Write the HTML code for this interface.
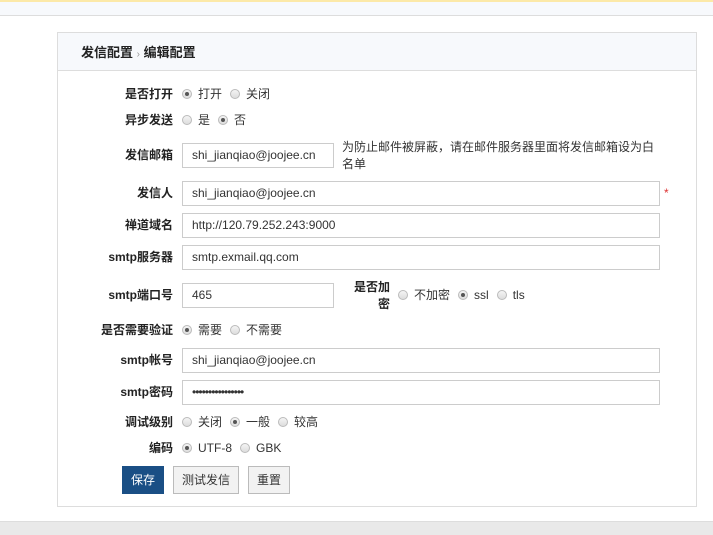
<!DOCTYPE html>
<html><head><meta charset="utf-8"><style>
*{box-sizing:border-box;margin:0;padding:0}
body{width:713px;height:535px;background:#fff;font-family:"Liberation Sans","Noto Sans CJK SC",sans-serif;font-size:12px;color:#333;position:relative;overflow:hidden}
.a{position:absolute}
.top{left:0;top:0;width:713px;height:16px;background:#f7f9fc;border-top:2px solid #fce9a8;border-bottom:1px solid #ddd}
.bot{left:0;top:521px;width:713px;height:14px;background:#e9e9e9;border-top:1px solid #ddd}
.panel{left:57px;top:32px;width:640px;height:475px;border:1px solid #ddd}
.hdr{left:58px;top:33px;width:638px;height:38px;background:#f7f9fc;border-bottom:1px solid #ddd;font-weight:bold;font-size:13px;color:#222;padding:9px 0 0 23px}
.lbl{right:540px;font-weight:bold;color:#222;text-align:right;line-height:14px}
.inp{left:182px;height:25px;border:1px solid #ccc;padding:0 9px;line-height:23px;color:#333}
.r{display:inline-block;width:10px;height:10px;border-radius:50%;border:1px solid #bbb;background:linear-gradient(#f4f4f4,#ddd);vertical-align:-1px;margin:0 6px 0 0;position:relative}
.r.on::after{content:"";position:absolute;left:2px;top:2px;width:4px;height:4px;border-radius:50%;background:#555}
.opt{left:182px;line-height:14px;color:#333}
.opt span{margin-right:8px}
.btn{top:466px;height:28px;border:1px solid #bbb;background:#f2f2f2;text-align:center;line-height:26px;color:#333}
</style></head><body>
<div class="a top"></div>
<div class="a panel"></div>
<div class="a hdr">发信配置 <span style="font-weight:normal;color:#999;font-size:10px">›</span> 编辑配置</div>

<div class="a lbl" style="top:87px">是否打开</div>
<div class="a opt" style="top:87px"><i class="r on"></i><span>打开</span><i class="r"></i><span>关闭</span></div>
<div class="a lbl" style="top:113px">异步发送</div>
<div class="a opt" style="top:113px"><i class="r"></i><span>是</span><i class="r on"></i><span>否</span></div>

<div class="a lbl" style="top:148px">发信邮箱</div>
<div class="a inp" style="top:143px;width:152px">shi_jianqiao@joojee.cn</div>
<div class="a" style="left:342px;top:139px;width:320px;line-height:17px">为防止邮件被屏蔽，请在邮件服务器里面将发信邮箱设为白名单</div>

<div class="a lbl" style="top:186px">发信人</div>
<div class="a inp" style="top:181px;width:478px">shi_jianqiao@joojee.cn</div>
<div class="a" style="left:664px;top:186px;color:#d33">*</div>

<div class="a lbl" style="top:218px">禅道域名</div>
<div class="a inp" style="top:213px;width:478px">http://120.79.252.243:9000</div>
<div class="a lbl" style="top:250px">smtp服务器</div>
<div class="a inp" style="top:245px;width:478px">smtp.exmail.qq.com</div>

<div class="a lbl" style="top:288px">smtp端口号</div>
<div class="a inp" style="top:283px;width:152px">465</div>
<div class="a" style="left:348px;top:279px;width:42px;font-weight:bold;color:#222;text-align:right;line-height:17px">是否加密</div>
<div class="a opt" style="left:398px;top:288px"><i class="r"></i><span>不加密</span><i class="r on"></i><span>ssl</span><i class="r"></i><span>tls</span></div>

<div class="a lbl" style="top:323px">是否需要验证</div>
<div class="a opt" style="top:323px"><i class="r on"></i><span>需要</span><i class="r"></i><span>不需要</span></div>

<div class="a lbl" style="top:353px">smtp帐号</div>
<div class="a inp" style="top:348px;width:478px">shi_jianqiao@joojee.cn</div>
<div class="a lbl" style="top:385px">smtp密码</div>
<div class="a inp" style="top:380px;width:478px;letter-spacing:-1px">••••••••••••••••</div>

<div class="a lbl" style="top:415px">调试级别</div>
<div class="a opt" style="top:415px"><i class="r"></i><span>关闭</span><i class="r on"></i><span>一般</span><i class="r"></i><span>较高</span></div>
<div class="a lbl" style="top:441px">编码</div>
<div class="a opt" style="top:441px"><i class="r on"></i><span>UTF-8</span><i class="r"></i><span>GBK</span></div>

<div class="a btn" style="left:122px;width:42px;background:#1a4f85;border-color:#1a4f85;color:#fff">保存</div>
<div class="a btn" style="left:173px;width:66px">测试发信</div>
<div class="a btn" style="left:248px;width:42px">重置</div>
<div class="a bot"></div>
</body></html>
